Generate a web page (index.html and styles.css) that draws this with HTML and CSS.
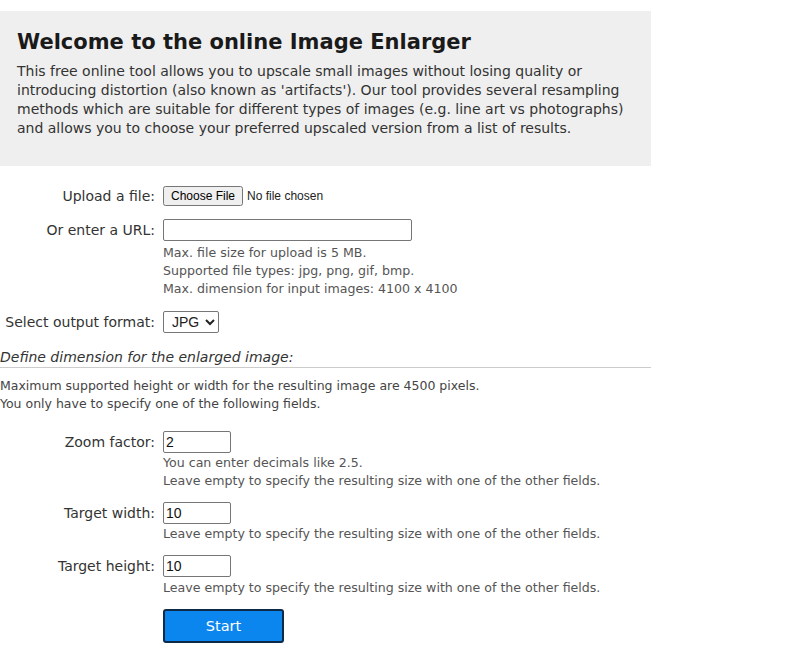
FILE: index.html
```html
<!DOCTYPE html>
<html>
<head>
<meta charset="utf-8">
<link rel="stylesheet" href="styles.css">
</head>
<body>
<div class="intro">
  <h1>Welcome to the online Image Enlarger</h1>
  <p>This free online tool allows you to upscale small images without losing quality or introducing distortion (also known as 'artifacts'). Our tool provides several resampling methods which are suitable for different types of images (e.g. line art vs photographs) and allows you to choose your preferred upscaled version from a list of results.</p>
</div>
<form class="form">
  <div class="row row-upload">
    <label class="lbl">Upload a file:</label>
    <div class="field"><input class="file" type="file"></div>
  </div>
  <div class="row row-url">
    <label class="lbl">Or enter a URL:</label>
    <div class="field"><input class="url" type="text"></div>
  </div>
  <div class="hint-row">
    <div class="hint hint-url">Max. file size for upload is 5 MB.<br>Supported file types: jpg, png, gif, bmp.<br>Max. dimension for input images: 4100 x 4100</div>
  </div>
  <div class="row row-format">
    <label class="lbl">Select output format:</label>
    <div class="field"><select class="sel"><option>JPG</option><option>PNG</option></select></div>
  </div>
  <div class="section-title">Define dimension for the enlarged image:</div>
  <div class="section-note">Maximum supported height or width for the resulting image are 4500 pixels.<br>You only have to specify one of the following fields.</div>
  <div class="row row-zoom">
    <label class="lbl">Zoom factor:</label>
    <div class="field"><input class="num" type="text" value="2"></div>
  </div>
  <div class="hint-row">
    <div class="hint hint-zoom">You can enter decimals like 2.5.<br>Leave empty to specify the resulting size with one of the other fields.</div>
  </div>
  <div class="row row-w">
    <label class="lbl">Target width:</label>
    <div class="field"><input class="num" type="text" value="10"></div>
  </div>
  <div class="hint-row">
    <div class="hint hint-w">Leave empty to specify the resulting size with one of the other fields.</div>
  </div>
  <div class="row row-h">
    <label class="lbl">Target height:</label>
    <div class="field"><input class="num" type="text" value="10"></div>
  </div>
  <div class="hint-row">
    <div class="hint hint-h">Leave empty to specify the resulting size with one of the other fields.</div>
  </div>
  <div class="hint-row submit-row">
    <button class="start" type="button">Start</button>
  </div>
</form>
</body>
</html>
```
FILE: styles.css
```css
html, body {
  margin: 0;
  padding: 0;
  background: #ffffff;
}
body {
  font-family: "DejaVu Sans", Verdana, sans-serif;
  color: #222;
}
.intro {
  margin-top: 11px;
  width: 651px;
  box-sizing: border-box;
  height: 155px;
  background: #efefef;
  padding: 17px 17px 0 17px;
}
.intro h1 {
  margin: 0;
  font-size: 21px;
  line-height: 28px;
  font-weight: bold;
  color: #1a1a1a;
}
.intro p {
  margin: 6px 0 0 0;
  font-size: 14px;
  line-height: 19px;
  color: #333;
}
.form {
  width: 651px;
}
.row {
  display: flex;
  align-items: center;
}
.lbl {
  flex: none;
  text-align: right;
  font-size: 14px;
  color: #333;
  padding-right: 8px;
  box-sizing: border-box;
  width: 163px;
}
.field {
  display: flex;
  align-items: center;
}
.row-upload { margin-top: 18px; height: 24px; }
.file {
  font-family: "Liberation Sans", Arial, sans-serif;
  font-size: 12px;
  color: #222;
}
.row-url { margin-top: 11px; }
.url {
  width: 249px;
  height: 22px;
  box-sizing: border-box;
  border: 1px solid #767676;
  border-radius: 2px;
  padding: 1px 2px;
  font-size: 14px;
}
.hint-row {
  padding-left: 163px;
}
.hint {
  font-size: 12.6px;
  line-height: 18px;
  color: #555;
}
.hint-url { margin-top: 3px; }
.hint-zoom { margin-top: 1px; }
.hint-w { margin-top: 1px; }
.hint-h { margin-top: 2px; }
.row-format { margin-top: 13px; }
.sel {
  height: 22px;
  width: 56px;
  font-family: "Liberation Sans", Arial, sans-serif;
  font-size: 14px;
  color: #222;
  border: 1px solid #767676;
  border-radius: 2px;
  background: #fff;
  padding: 0 0 0 4px;
}
.section-title {
  margin-top: 15px;
  font-style: italic;
  font-size: 14px;
  line-height: 18px;
  color: #333;
  padding-bottom: 1px;
  border-bottom: 1px solid #cccccc;
}
.section-note {
  margin-top: 9px;
  font-size: 12.5px;
  line-height: 18px;
  color: #444;
}
.num {
  width: 68px;
  height: 22px;
  box-sizing: border-box;
  border: 1px solid #767676;
  border-radius: 2px;
  padding: 1px 2px;
  font-family: "Liberation Sans", Arial, sans-serif;
  font-size: 14px;
  color: #111;
}
.row-zoom { margin-top: 18px; }
.row-w { margin-top: 12px; }
.row-h { margin-top: 12px; }
.submit-row { margin-top: 12px; }
.start {
  width: 121px;
  height: 34px;
  background: #0b86ee;
  color: #fff;
  border: 2px solid #0d2a48;
  border-radius: 3px;
  font-family: "DejaVu Sans", Verdana, sans-serif;
  font-size: 14.5px;
  cursor: pointer;
}
```
